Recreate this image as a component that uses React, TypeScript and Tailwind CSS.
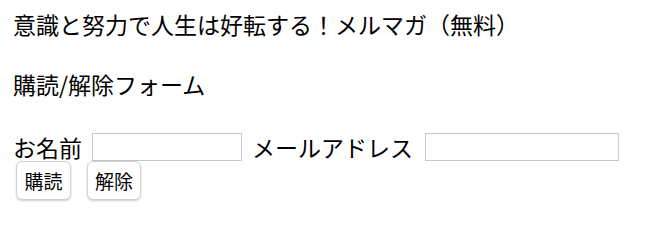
export default function App() {
  return (
    <div className="min-h-[237px] bg-white pl-[13px] pt-[10px] text-black font-['Noto_Sans_CJK_JP','Hiragino_Sans',sans-serif] text-[23px] leading-[28px]">
      <p>意識と努力で人生は好転する！メルマガ（無料）</p>
      <p className="mt-[32px]">購読/解除フォーム</p>
      <form className="mt-[35px]">
        <div className="flex h-[28px] items-center">
          <span>お名前</span>
          <input type="text" className="ml-[10px] h-[28px] w-[150px] border border-[#c8c8c8] bg-white px-1 text-[16px] outline-none" />
          <span className="ml-[10px]">メールアドレス</span>
          <input type="email" className="ml-[12px] h-[28px] w-[194px] border border-[#c8c8c8] bg-white px-1 text-[16px] outline-none" />
        </div>
        <div className="ml-[3px] flex gap-[16px]">
          <button type="button" className="h-[39px] w-[55px] rounded-[6px] border border-[#d2d2d2] bg-white text-[19px] leading-none shadow-[0_1px_2px_rgba(0,0,0,0.2)]">
            購読
          </button>
          <button type="button" className="h-[39px] w-[54px] rounded-[6px] border border-[#d2d2d2] bg-white text-[19px] leading-none shadow-[0_1px_2px_rgba(0,0,0,0.2)]">
            解除
          </button>
        </div>
      </form>
    </div>
  );
}
